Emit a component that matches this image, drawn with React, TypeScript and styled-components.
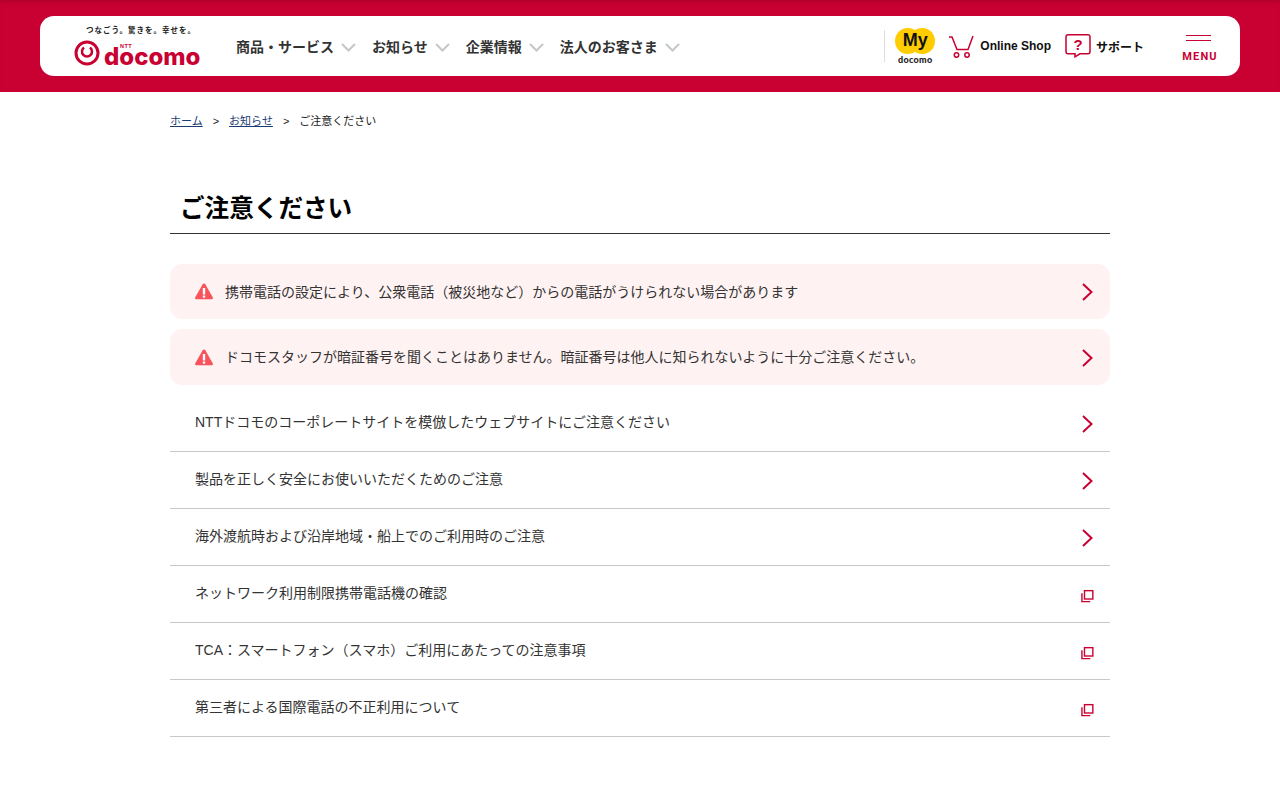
import React from "react";
import styled, { createGlobalStyle } from "styled-components";

const Global = createGlobalStyle`
  html, body { margin: 0; padding: 0; background: #fff; }
  body { font-family: "Liberation Sans", "Noto Sans CJK JP", sans-serif; color: #333; }
  a { text-decoration: none; color: inherit; }
`;

const Page = styled.div``;
const Header = styled.header`
  height: 92px;
  box-sizing: border-box;
  padding: 16px 40px;
  background: #c90032;
  box-shadow: inset 0 4px 4px -3px rgba(90, 0, 20, 0.3);
`;
const Bar = styled.div`
  height: 60px;
  background: #fff;
  border-radius: 14px;
  display: flex;
  align-items: center;
`;
const Logo = styled.a`
  width: 127px;
  margin-left: 34px;
  display: flex;
  flex-direction: column;
  align-items: flex-start;
  position: relative;
  color: #c90032;
`;
const Tagline = styled.span`
  font-size: 7.5px;
  line-height: 8px;
  font-weight: 700;
  color: #222;
  letter-spacing: 1px;
  white-space: nowrap;
  margin-bottom: 5px;
  margin-left: 12px;
`;
const LogoRow = styled.span`
  display: flex;
  align-items: center;
  gap: 4px;
  height: 26px;
`;
const LogoWord = styled.span`
  font-family: "Inter", sans-serif;
  font-weight: 800;
  font-size: 24px;
  line-height: 16px;
  color: #c90032;
  align-self: flex-end;
  margin-bottom: 1px;
`;
const Ntt = styled.span`
  position: absolute;
  left: 46px;
  top: 16px;
  font-size: 5.5px;
  line-height: 6px;
  letter-spacing: 0.5px;
  font-weight: 700;
  color: #c90032;
`;
const Nav = styled.nav`
  display: flex;
  align-items: center;
  margin-left: 35px;
  margin-top: 2px;
  gap: 16px;
`;
const NavItem = styled.a`
  display: flex;
  align-items: center;
  gap: 7px;
  font-size: 14px;
  font-weight: 700;
  color: #333;
  line-height: 20px;
  white-space: nowrap;
`;
const Right = styled.div`
  margin-left: auto;
  display: flex;
  align-items: center;
  height: 46px;
`;
const MyBlock = styled.a`
  border-left: 1px solid #ddd;
  height: 32px;
  padding-left: 10px;
  display: flex;
  flex-direction: column;
  align-items: center;
  width: 40px;
  margin-right: 13px;
`;
const MyBadge = styled.span`
  width: 40px;
  height: 26px;
  position: relative;
  flex: none;
  margin-top: -2px;
  display: flex;
  align-items: center;
  justify-content: center;
`;
const MyShape = styled.svg`
  position: absolute;
  inset: 0;
`;
const MyText = styled.span`
  position: relative;
  top: -1px;
  color: #111;
  font-size: 18px;
  font-weight: 700;
  line-height: 25px;
`;
const MyLabel = styled.span`
  font-family: "Lato", sans-serif;
  font-size: 9px;
  font-weight: 900;
  line-height: 10px;
  margin-top: 1px;
  color: #222;
  letter-spacing: 0.3px;
`;
const ToolLink = styled.a<{ $mr: number; $gap: number }>`
  display: flex;
  align-items: center;
  gap: ${(p) => p.$gap}px;
  font-size: 12px;
  font-weight: 700;
  color: #111;
  white-space: nowrap;
  margin-right: ${(p) => p.$mr}px;
`;
const MenuButton = styled.a`
  width: 36px;
  margin-right: 22px;
  padding-top: 5px;
  display: flex;
  flex-direction: column;
  align-items: center;
  color: #c90032;
`;
const MenuLine = styled.span`
  display: block;
  width: 25px;
  height: 1px;
  background: #c90032;
  margin: 0 4px 4px 0;
`;
const MenuLabel = styled.span`
  font-family: "Roboto", sans-serif;
  font-size: 11px;
  line-height: 13px;
  font-weight: 700;
  letter-spacing: 1.2px;
  margin-top: 5px;
`;
const Main = styled.main`
  width: 940px;
  margin: 0 auto;
`;
const Crumbs = styled.ol`
  list-style: none;
  margin: 0;
  padding: 21px 0 0;
  height: 56px;
  box-sizing: border-box;
  display: flex;
  font-size: 11px;
  line-height: 16px;
  color: #222;
`;
const Crumb = styled.li`
  & + &::before {
    content: ">";
    margin: 0 10px;
  }
`;
const CrumbLink = styled.a`
  color: #1a3b73;
  text-decoration: underline;
`;
const Title = styled.h1`
  margin: 40px 0 30px;
  padding: 1px 10px 4px;
  font-size: 24.6px;
  line-height: 40px;
  font-weight: 700;
  color: #000;
  border-bottom: 1px solid #333;
  height: 40px;
`;
const Alert = styled.a<{ $h: number }>`
  display: flex;
  align-items: center;
  height: ${(p) => p.$h}px;
  padding: 0 16px 0 25px;
  margin-bottom: 10px;
  border-radius: 12px;
  background: #fff2f2;
  font-size: 14px;
  color: #333;
`;
const AlertText = styled.span`
  margin-left: 12px;
  flex: 1;
  position: relative;
  top: -1px;
`;
const Row = styled.a`
  display: flex;
  align-items: center;
  height: 56px;
  padding: 0 16px 0 25px;
  border-bottom: 1px solid #c8c8c8;
  font-size: 14px;
  color: #333;
`;
const RowText = styled.span`
  flex: 1;
  position: relative;
  top: -2px;
`;
const IconSlot = styled.span<{ $down?: number }>`
  display: flex;
  width: 13px;
  justify-content: center;
  position: relative;
  top: ${(p) => p.$down ?? 1}px;
`;

const Chevron = ({ down }: { down?: number }) => (
  <IconSlot $down={down}>
    <svg width="13" height="20" viewBox="0 0 13 20" fill="none">
      <path d="M2 2l8.500 8-8.500 8" stroke="#c90032" strokeWidth="2" />
    </svg>
  </IconSlot>
);
const External = () => (
  <IconSlot $down={2}>
    <svg width="14" height="14" viewBox="0 0 14 14" fill="none" stroke="#c90032" strokeWidth="1.500">
      <rect x="3.750" y="1.250" width="9" height="9" />
      <path d="M1 4v9h9" />
    </svg>
  </IconSlot>
);
const Warn = () => (
  <svg width="18" height="17" viewBox="0 0 18 17">
    <path d="M9 0.500c.6 0 1 .3 1.300.8l7.400 13c.5.900 0 2-1.200 2H1.500C.3 16.300-.2 15.200.3 14.300l7.400-13C8 .8 8.400.5 9 .5z" fill="#f8525a" />
    <rect x="7.800" y="5" width="2.400" height="6.500" fill="#fff" />
    <rect x="7.800" y="12.500" width="2.400" height="2.200" fill="#fff" />
  </svg>
);
const Caret = () => (
  <svg width="15" height="9" viewBox="0 0 15 9" fill="none">
    <path d="M1 1l6.500 6.500L14 1" stroke="#c4c8c8" strokeWidth="2" />
  </svg>
);

const navItems = ["商品・サービス", "お知らせ", "企業情報", "法人のお客さま"];
const internal = [
  "NTTドコモのコーポレートサイトを模倣したウェブサイトにご注意ください",
  "製品を正しく安全にお使いいただくためのご注意",
  "海外渡航時および沿岸地域・船上でのご利用時のご注意",
];
const external = [
  "ネットワーク利用制限携帯電話機の確認",
  "TCA：スマートフォン（スマホ）ご利用にあたっての注意事項",
  "第三者による国際電話の不正利用について",
];

export default function App() {
  return (
    <Page lang="ja">
      <Global />
      <Header>
        <Bar>
          <Logo href="#">
            <Tagline>つなごう。驚きを。幸せを。</Tagline>
            <LogoRow>
              <svg width="26" height="26" viewBox="0 0 26 26" fill="none">
                <circle cx="13" cy="13" r="11" stroke="#c90032" strokeWidth="3" />
                <path d="M10 7.500a5 5 0 1 0 6 0" stroke="#c90032" strokeWidth="2.500" />
              </svg>
              <LogoWord>docomo</LogoWord>
            </LogoRow>
            <Ntt>NTT</Ntt>
          </Logo>
          <Nav>
            {navItems.map((t) => (
              <NavItem href="#" key={t}>
                {t}
                <Caret />
              </NavItem>
            ))}
          </Nav>
          <Right>
            <MyBlock href="#">
              <MyBadge>
                <MyShape width="40" height="26" viewBox="0 0 40 26">
                  <path d="M12.500 0c3 0 5.500 .8 7.500 2 2-1.200 4.500-2 7.500-2C34.500 0 40 5.800 40 13s-5.500 13-12.500 13c-3 0-5.500-.8-7.500-2-2 1.200-4.500 2-7.500 2C5.500 26 0 20.200 0 13S5.500 0 12.500 0z" fill="#ffcc00" />
                </MyShape>
                <MyText>My</MyText>
              </MyBadge>
              <MyLabel>docomo</MyLabel>
            </MyBlock>
            <ToolLink href="#" $mr={14} $gap={6}>
              <svg width="26" height="24" viewBox="0 0 26 24" fill="none" stroke="#c90032" strokeWidth="1.500">
                <path d="M1 3h3l5 12.500h11L25 2" />
                <circle cx="8.500" cy="21" r="2.200" />
                <circle cx="19" cy="21" r="2.200" />
              </svg>
              Online Shop
            </ToolLink>
            <ToolLink href="#" $mr={38} $gap={5}>
              <svg width="26" height="24" viewBox="0 0 26 24" fill="none">
                <path d="M3 .8h20a2 2 0 0 1 2 2v15a2 2 0 0 1-2 2h-8l-5 3v-3H3a2 2 0 0 1-2-2v-15a2 2 0 0 1 2-2z" stroke="#c90032" strokeWidth="1.500" />
                <text x="13" y="16" textAnchor="middle" fontSize="15" fontWeight="700" fill="#c90032" fontFamily="Liberation Sans">?</text>
              </svg>
              サポート
            </ToolLink>
            <MenuButton href="#">
              <MenuLine />
              <MenuLine />
              <MenuLabel>MENU</MenuLabel>
            </MenuButton>
          </Right>
        </Bar>
      </Header>
      <Main>
        <Crumbs>
          <Crumb><CrumbLink href="#">ホーム</CrumbLink></Crumb>
          <Crumb><CrumbLink href="#">お知らせ</CrumbLink></Crumb>
          <Crumb>ご注意ください</Crumb>
        </Crumbs>
        <Title>ご注意ください</Title>
        <Alert href="#" $h={55}>
          <Warn />
          <AlertText>携帯電話の設定により、公衆電話（被災地など）からの電話がうけられない場合があります</AlertText>
          <Chevron down={0} />
        </Alert>
        <Alert href="#" $h={56}>
          <Warn />
          <AlertText>ドコモスタッフが暗証番号を聞くことはありません。暗証番号は他人に知られないように十分ご注意ください。</AlertText>
          <Chevron />
        </Alert>
        {internal.map((t) => (
          <Row href="#" key={t}>
            <RowText>{t}</RowText>
            <Chevron />
          </Row>
        ))}
        {external.map((t) => (
          <Row href="#" key={t}>
            <RowText>{t}</RowText>
            <External />
          </Row>
        ))}
      </Main>
    </Page>
  );
}
